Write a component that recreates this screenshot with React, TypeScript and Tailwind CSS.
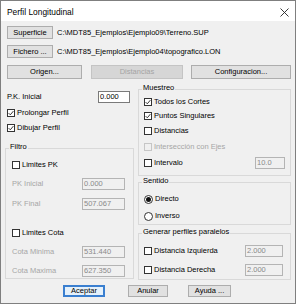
import React from "react";

const font = { fontFamily: '"Liberation Sans", Arial, sans-serif' };

function Check({ checked = false, disabled = false }: { checked?: boolean; disabled?: boolean }) {
  return (
    <span
      className={
        disabled
          ? "w-[8px] h-[8px] border border-[#c6c6c6] bg-[#f0f0f0] flex items-center justify-center shrink-0"
          : "w-[8px] h-[8px] border border-[#333333] bg-white flex items-center justify-center shrink-0"
      }
    >
      {checked && (
        <svg width="6" height="6" viewBox="0 0 6 6">
          <path d="M0.6 3.1 L2.3 4.8 L5.4 1.1" stroke="#222" strokeWidth="0.9" fill="none" />
        </svg>
      )}
    </span>
  );
}

function Radio({ checked = false }: { checked?: boolean }) {
  return (
    <span className="w-[9px] h-[9px] rounded-full border border-[#333333] bg-white flex items-center justify-center shrink-0">
      {checked && <span className="w-[5px] h-[5px] rounded-full bg-[#111111]" />}
    </span>
  );
}

function Input({ value, disabled = false, className }: { value: string; disabled?: boolean; className: string }) {
  return (
    <div
      className={
        (disabled
          ? "border border-[#b4b4b4] bg-[#f0f0f0] text-[#8a8a8a] "
          : "border border-[#7a7a7a] bg-white text-black ") +
        "h-[12px] flex items-center pl-[1px] leading-none " +
        className
      }
    >
      {value}
    </div>
  );
}

function Btn({ children, className, disabled = false, primary = false }: { children: React.ReactNode; className: string; disabled?: boolean; primary?: boolean }) {
  let cls = "border border-[#adadad] bg-[#e1e1e1] text-black ";
  if (disabled) cls = "border border-[#c4c4c4] bg-[#d6d6d6] text-[#a4a4a4] ";
  if (primary) cls = "border-2 border-[#3a7fd0] bg-[#e5f1fb] text-black ";
  return <div className={cls + "flex items-center justify-center leading-none shrink-0 " + className}>{children}</div>;
}

function Group({ label, className, children }: { label: string; className: string; children: React.ReactNode }) {
  return (
    <div className={"relative border border-[#d9d9d9] flex flex-col " + className}>
      <span className="absolute left-[3px] top-[-7px] bg-[#f0f0f0] px-[1px] leading-[10px]">{label}</span>
      {children}
    </div>
  );
}

export default function App() {
  return (
    <div
      style={font}
      className="w-[296px] h-[304px] border border-[#7f7f7f] bg-[#f0f0f0] text-[7.5px] text-black flex flex-col overflow-hidden"
    >
      {/* title bar */}
      <div className="h-[20px] bg-white flex items-center pl-[6px] pr-[6px] pt-[3px] shrink-0">
        <span className="text-[8.4px] leading-none">Perfil Longitudinal</span>
        <svg className="ml-auto" width="9" height="9" viewBox="0 0 9 9">
          <path d="M0.5 0.5 L8.5 8.5 M8.5 0.5 L0.5 8.5" stroke="#222" strokeWidth="0.9" />
        </svg>
      </div>

      {/* row 1 */}
      <div className="mt-[5px] h-[13px] flex items-center shrink-0">
        <Btn className="ml-[6px] w-[46px] h-[13px]">Superficie</Btn>
        <span className="ml-[4px] leading-none">C:\MDT85_Ejemplos\Ejemplo09\Terreno.SUP</span>
      </div>
      {/* row 2 */}
      <div className="mt-[6px] h-[13px] flex items-center shrink-0">
        <Btn className="ml-[6px] w-[46px] h-[13px]">Fichero ...</Btn>
        <span className="ml-[4px] leading-none">C:\MDT85_Ejemplos\Ejemplo04\topografico.LON</span>
      </div>
      {/* row 3 */}
      <div className="mt-[7px] h-[14px] flex items-center shrink-0">
        <Btn className="ml-[6px] w-[75px] h-[14px]">Origen...</Btn>
        <Btn disabled className="ml-[9px] w-[92px] h-[14px]">Distancias</Btn>
        <Btn className="ml-[8px] w-[100px] h-[14px]">Configuracion...</Btn>
      </div>

      {/* columns */}
      <div className="flex items-start ml-[4px] shrink-0">
        {/* left */}
        <div className="w-[129px] flex flex-col">
          <div className="mt-[12px] h-[12px] flex items-center">
            <span className="pl-[2px] leading-none">P.K. Inicial</span>
            <Input value="0.000" className="ml-auto mr-[4px] w-[32px]" />
          </div>
          <div className="mt-[4px] h-[12px] flex items-center gap-[2px] pl-[2px]">
            <Check checked />
            <span className="leading-none">Prolongar Perfil</span>
          </div>
          <div className="mt-[3px] h-[12px] flex items-center gap-[2px] pl-[2px]">
            <Check checked />
            <span className="leading-none">Dibujar Perfil</span>
          </div>
          <Group label="Filtro" className="mt-[14px] pb-[1px]">
            <div className="mt-[10px] h-[12px] flex items-center gap-[2px] pl-[6px]">
              <Check />
              <span className="leading-none">Limites PK</span>
            </div>
            <div className="mt-[7px] h-[12px] flex items-center pl-[6px]">
              <span className="leading-none text-[#a6a6a6]">PK Inicial</span>
              <Input disabled value="0.000" className="ml-auto mr-[8px] w-[43px]" />
            </div>
            <div className="mt-[8px] h-[12px] flex items-center pl-[6px]">
              <span className="leading-none text-[#a6a6a6]">PK Final</span>
              <Input disabled value="507.067" className="ml-auto mr-[8px] w-[43px]" />
            </div>
            <div className="mt-[17px] h-[12px] flex items-center gap-[2px] pl-[6px]">
              <Check />
              <span className="leading-none">Limites Cota</span>
            </div>
            <div className="mt-[7px] h-[12px] flex items-center pl-[6px]">
              <span className="leading-none text-[#a6a6a6]">Cota Minima</span>
              <Input disabled value="531.440" className="ml-auto mr-[8px] w-[43px]" />
            </div>
            <div className="mt-[7px] h-[12px] flex items-center pl-[6px]">
              <span className="leading-none text-[#a6a6a6]">Cota Maxima</span>
              <Input disabled value="627.350" className="ml-auto mr-[8px] w-[43px]" />
            </div>
          </Group>
        </div>

        {/* right */}
        <div className="w-[153px] ml-[4px] flex flex-col">
          <Group label="Muestreo" className="mt-[10px] pb-[6px]">
            <div className="mt-[6px] h-[12px] flex items-center gap-[2px] pl-[5px]">
              <Check checked />
              <span className="leading-none">Todos los Cortes</span>
            </div>
            <div className="mt-[2px] h-[12px] flex items-center gap-[2px] pl-[5px]">
              <Check checked />
              <span className="leading-none">Puntos Singulares</span>
            </div>
            <div className="mt-[3px] h-[12px] flex items-center gap-[2px] pl-[5px]">
              <Check />
              <span className="leading-none">Distancias</span>
            </div>
            <div className="mt-[4px] h-[12px] flex items-center gap-[2px] pl-[5px]">
              <Check disabled />
              <span className="leading-none text-[#a6a6a6]">Intersección con Ejes</span>
            </div>
            <div className="mt-[4px] h-[12px] flex items-center gap-[2px] pl-[5px]">
              <Check />
              <span className="leading-none">Intervalo</span>
              <Input disabled value="10.0" className="ml-auto mr-[5px] w-[30px]" />
            </div>
          </Group>
          <Group label="Sentido" className="mt-[6px] pb-[2px]">
            <div className="mt-[10px] h-[12px] flex items-center gap-[2px] pl-[5px]">
              <Radio checked />
              <span className="leading-none">Directo</span>
            </div>
            <div className="mt-[5px] h-[12px] flex items-center gap-[2px] pl-[5px]">
              <Radio />
              <span className="leading-none">Inverso</span>
            </div>
          </Group>
          <Group label="Generar perfiles paralelos" className="mt-[8px] pb-[3px]">
            <div className="mt-[11px] h-[12px] flex items-center gap-[2px] pl-[5px]">
              <Check />
              <span className="leading-none">Distancia Izquierda</span>
              <Input disabled value="2.000" className="ml-auto mr-[7px] w-[38px]" />
            </div>
            <div className="mt-[7px] h-[12px] flex items-center gap-[2px] pl-[5px]">
              <Check />
              <span className="leading-none">Distancia Derecha</span>
              <Input disabled value="2.000" className="ml-auto mr-[7px] w-[38px]" />
            </div>
          </Group>
        </div>
      </div>

      {/* bottom buttons */}
      <div className="mt-[5px] h-[12px] flex items-center shrink-0">
        <Btn primary className="ml-[62px] w-[42px] h-[12px]">Aceptar</Btn>
        <Btn className="ml-[23px] w-[40px] h-[12px]">Anular</Btn>
        <Btn className="ml-[20px] w-[43px] h-[12px]">Ayuda ...</Btn>
      </div>
    </div>
  );
}
